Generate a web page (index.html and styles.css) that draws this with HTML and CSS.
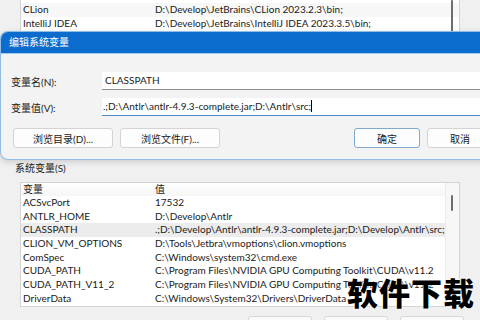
FILE: index.html
```html
<!DOCTYPE html>
<html>
<head>
  <title>编辑系统变量</title>
  <link rel="stylesheet" href="styles.css">
</head>
<body>
  <div class="window">
    <!-- user variables list, mostly hidden under the dialog -->
    <div class="listbox top-list">
      <div class="row"><span class="name">CLion</span><span class="value">D:\Develop\JetBrains\CLion 2023.2.3\bin;</span></div>
      <div class="row"><span class="name">IntelliJ IDEA</span><span class="value">D:\Develop\JetBrains\IntelliJ IDEA 2023.3.5\bin;</span></div>
      <div class="thumb top-thumb"></div>
    </div>

    <div class="section-label">系统变量(S)</div>

    <div class="listbox sys-list">
      <div class="row head"><span class="name">变量</span><span class="value">值</span></div>
      <div class="row"><span class="name">ACSvcPort</span><span class="value">17532</span></div>
      <div class="row"><span class="name">ANTLR_HOME</span><span class="value">D:\Develop\Antlr</span></div>
      <div class="row selected"><span class="name">CLASSPATH</span><span class="value">.;D:\Develop\Antlr\antlr-4.9.3-complete.jar;D:\Develop\Antlr\src;</span></div>
      <div class="row"><span class="name">CLION_VM_OPTIONS</span><span class="value">D:\Tools\Jetbra\vmoptions\clion.vmoptions</span></div>
      <div class="row"><span class="name">ComSpec</span><span class="value">C:\Windows\system32\cmd.exe</span></div>
      <div class="row"><span class="name">CUDA_PATH</span><span class="value">C:\Program Files\NVIDIA GPU Computing Toolkit\CUDA\v11.2</span></div>
      <div class="row"><span class="name">CUDA_PATH_V11_2</span><span class="value">C:\Program Files\NVIDIA GPU Computing Toolkit\CUDA\v11.2</span></div>
      <div class="row"><span class="name">DriverData</span><span class="value">C:\Windows\System32\Drivers\DriverData</span></div>
      <div class="track"><div class="thumb"></div></div>
    </div>

    <div class="bottom-buttons">
      <div class="ghost-btn"></div>
      <div class="ghost-btn"></div>
      <div class="ghost-btn"></div>
    </div>
  </div>

  <!-- edit dialog over the window -->
  <div class="dialog">
    <div class="titlebar">编辑系统变量</div>
    <div class="dialog-body">
      <div class="field-row">
        <label class="field-label">变量名(N):</label>
        <div class="field">CLASSPATH</div>
      </div>
      <div class="field-row">
        <label class="field-label">变量值(V):</label>
        <div class="field focused">.;D:\Antlr\antlr-4.9.3-complete.jar;D:\Antlr\src;<span class="caret"></span></div>
      </div>
      <div class="button-row">
        <button class="btn wide">浏览目录(D)...</button>
        <button class="btn wide">浏览文件(F)...</button>
        <div class="spacer"></div>
        <button class="btn default">确定</button>
        <button class="btn">取消</button>
      </div>
    </div>
  </div>

  <div class="watermark">软件下载</div>
</body>
</html>
```

FILE: styles.css
```css
body {
  margin: 0;
  width: 480px;
  height: 320px;
  overflow: hidden;
  position: relative;
  background: #f0f0f0;
  font-family: Lato, "Noto Sans CJK SC", sans-serif;
  font-size: 10px;
  color: #1a1a1a;
}

.window {
  padding: 0 20px;
  border-right: 1px solid #d8d8d8;
  width: 447px;
}

/* list boxes */
.listbox {
  position: relative;
  background: #fff;
  border: 1px solid #d4d4d4;
  width: 438px;
}
.row {
  display: flex;
  height: 13.7px;
  line-height: 13.7px;
  white-space: nowrap;
  overflow: hidden;
  padding-right: 14px;
}
.name { width: 132px; padding-left: 2px; flex: none; }
.value { flex: 1; overflow: hidden; }

.top-list {
  height: 150px;
  padding-top: 3px;
  border-top: none;
}
.top-list .row:first-child { background: #f7f7f7; }
.thumb {
  position: absolute;
  width: 2px;
  background: #6e6e6e;
  border-radius: 1px;
}
.top-thumb { right: 6px; top: 0; height: 32px; }

.section-label {
  margin: 5px 0 0 -5px;
  height: 23px;
  line-height: 18px;
}

.sys-list {
  height: 123px;
}
.sys-list .head {
  height: 13px;
  line-height: 13px;
  background: linear-gradient(#ffffff, #f6f6f6);
}
.row.selected { background: #ececec; }
.track {
  position: absolute;
  top: 0;
  right: 0;
  width: 13px;
  height: 100%;
  background: #f7f7f7;
  border-left: 1px solid #ececec;
}
.track .thumb { left: 5px; top: 12px; height: 16px; }

.bottom-buttons {
  display: flex;
  gap: 12px;
  height: 14px;
  overflow: hidden;
  padding: 9px 0 0 228px;
}
.ghost-btn {
  width: 62px;
  height: 20px;
  background: #fbfbfb;
  border: 1px solid #d6d6d6;
  border-radius: 3px;
}

/* dialog */
.dialog {
  position: absolute;
  top: 31px;
  left: 0;
  width: 492px;
  height: 127px;
  background: #f3f3f3;
  border: 1px solid #8fbde6;
  border-right: none;
  border-radius: 8px 0 0 8px;
  overflow: hidden;
  box-shadow: 0 2px 6px rgba(0, 0, 0, 0.15);
}
.titlebar {
  height: 21px;
  line-height: 21px;
  background: #0b6cce;
  color: #fff;
  padding-left: 8px;
  border-bottom: 1px solid #9fcaf0;
}
.dialog-body {
  padding: 18px 0 0 10px;
}
.field-row {
  display: flex;
  align-items: center;
  margin-bottom: 8px;
}
.field-label { width: 91px; flex: none; }
.field {
  flex: 1;
  height: 17px;
  line-height: 17px;
  background: #fff;
  border-bottom: 1px solid #8c8c8c;
  padding-left: 3px;
  white-space: nowrap;
}
.field.focused { border-bottom: 1px solid #4a8ac4; padding-left: 1px; }
.caret {
  display: inline-block;
  width: 1px;
  height: 12px;
  background: #000;
  vertical-align: -2px;
}
.button-row {
  display: flex;
  align-items: center;
  gap: 7px;
  padding: 4px 0 0 2px;
}
.spacer { flex: 1; max-width: 131px; }
.btn {
  font: inherit;
  color: #1a1a1a;
  height: 20px;
  width: 66px;
  padding: 0;
  background: #fdfdfd;
  border: 1px solid #d3d3d3;
  border-radius: 3px;
}
.btn.wide { width: 100px; }
.btn.default { border: 1px solid #7fa9cf; }

.watermark {
  position: absolute;
  left: 347px;
  top: 269px;
  font-family: "Noto Sans CJK SC", sans-serif;
  font-weight: 900;
  font-size: 31px;
  letter-spacing: 1px;
  color: #000;
  text-shadow: 0 0 2px #fff, 0 0 2px #fff;
}
```
